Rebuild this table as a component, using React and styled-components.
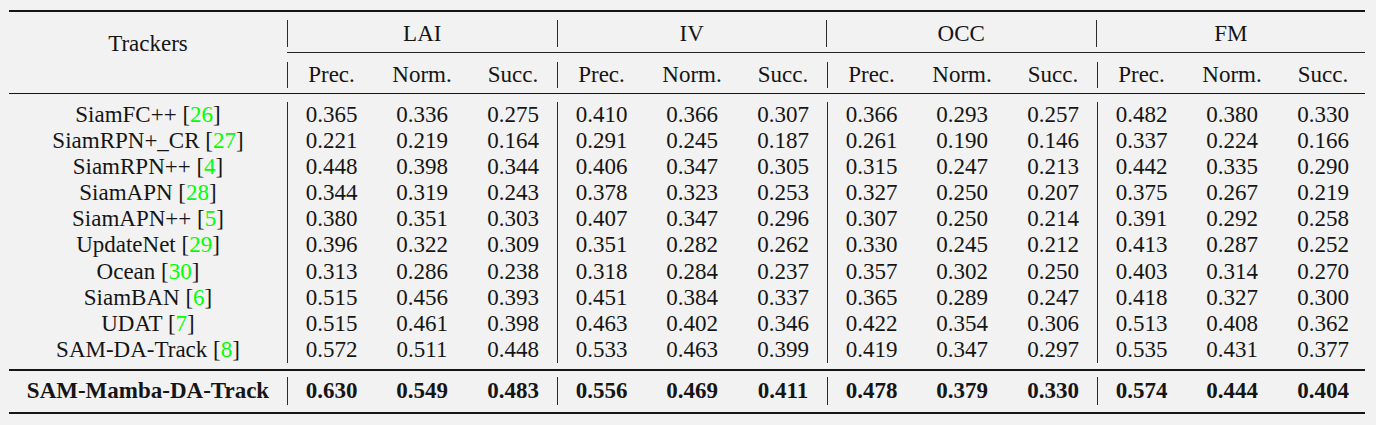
import React from 'react';
import styled, { createGlobalStyle } from 'styled-components';

const GlobalStyle = createGlobalStyle`
    html, body {
        margin: 0;
        padding: 0;
        background: #f2f2f2;
    }
    body {
        font-family: 'Liberation Serif', 'Times New Roman', serif;
        font-size: 23px;
        color: #151515;
    }
`;

const Table = styled.div`
    width: 1356px;
    margin-left: 9px;
    padding-top: 10px;
`;

const TopRule = styled.div`
    border-top: 2px solid #151515;
`;

const Head = styled.div`
    display: flex;
    border-bottom: 1px solid #151515;
`;

const TrackersHead = styled.div`
    width: 278px;
    display: flex;
    align-items: center;
    justify-content: center;
    padding-bottom: 17px;
`;

const HeadSide = styled.div`
    display: flex;
    flex-direction: column;
    width: 1078px;
`;

const GroupRow = styled.div`
    display: flex;
    border-bottom: 1px solid #222;
`;

const GroupTitle = styled.div`
    width: 270px;
    box-sizing: border-box;
    margin: 8px 0 5px;
    height: 27px;
    line-height: 27px;
    text-align: center;
    border-left: 1px solid #2a2a2a;
`;

const SubRow = styled.div`
    display: grid;
    grid-template-columns: repeat(4, 88px 94px 88px);
    padding: 9px 0 5px;
`;

const Row = styled.div`
    display: grid;
    grid-template-columns: 278px repeat(4, 88px 94px 88px);
    height: ${p => p.$h || '26.1px'};
    line-height: ${p => p.$h || '26.1px'};
    font-weight: ${p => (p.$bold ? 'bold' : 'normal')};
`;

const Cell = styled.div`
    box-sizing: border-box;
    text-align: center;
    white-space: nowrap;
    height: ${p => p.$h || 'auto'};
    line-height: ${p => p.$h || 'inherit'};
    border-left: ${p => (p.$bar ? '1px solid #2a2a2a' : 'none')};
`;

const Body = styled.div`
    padding: 8px 0 6px;
    border-bottom: 2px solid #151515;
`;

const Final = styled.div`
    padding: 6px 0 7px;
    border-bottom: 2px solid #151515;
`;

const Cite = styled.span`
    color: #00ff00;
`;

const groups = ['LAI', 'IV', 'OCC', 'FM'];
const metrics = ['Prec.', 'Norm.', 'Succ.'];

const rows = [
    ['SiamFC++', '26', '0.365 0.336 0.275 0.410 0.366 0.307 0.366 0.293 0.257 0.482 0.380 0.330'],
    ['SiamRPN+_CR', '27', '0.221 0.219 0.164 0.291 0.245 0.187 0.261 0.190 0.146 0.337 0.224 0.166'],
    ['SiamRPN++', '4', '0.448 0.398 0.344 0.406 0.347 0.305 0.315 0.247 0.213 0.442 0.335 0.290'],
    ['SiamAPN', '28', '0.344 0.319 0.243 0.378 0.323 0.253 0.327 0.250 0.207 0.375 0.267 0.219'],
    ['SiamAPN++', '5', '0.380 0.351 0.303 0.407 0.347 0.296 0.307 0.250 0.214 0.391 0.292 0.258'],
    ['UpdateNet', '29', '0.396 0.322 0.309 0.351 0.282 0.262 0.330 0.245 0.212 0.413 0.287 0.252'],
    ['Ocean', '30', '0.313 0.286 0.238 0.318 0.284 0.237 0.357 0.302 0.250 0.403 0.314 0.270'],
    ['SiamBAN', '6', '0.515 0.456 0.393 0.451 0.384 0.337 0.365 0.289 0.247 0.418 0.327 0.300'],
    ['UDAT', '7', '0.515 0.461 0.398 0.463 0.402 0.346 0.422 0.354 0.306 0.513 0.408 0.362'],
    ['SAM-DA-Track', '8', '0.572 0.511 0.448 0.533 0.463 0.399 0.419 0.347 0.297 0.535 0.431 0.377'],
];

const ours = '0.630 0.549 0.483 0.556 0.469 0.411 0.478 0.379 0.330 0.574 0.444 0.404';

const Values = ({ values, h }) =>
    values.split(' ').map((v, i) => (
        <Cell key={i} $bar={i % 3 === 0} $h={h}>
            {v}
        </Cell>
    ));

const App = () => (
    <>
        <GlobalStyle />
        <Table>
            <TopRule />
            <Head>
                <TrackersHead>Trackers</TrackersHead>
                <HeadSide>
                    <GroupRow>
                        {groups.map(g => (
                            <GroupTitle key={g}>{g}</GroupTitle>
                        ))}
                    </GroupRow>
                    <SubRow>
                        {groups.map(g =>
                            metrics.map((m, i) => (
                                <Cell key={g + m} $bar={i === 0} $h="26px">
                                    {m}
                                </Cell>
                            ))
                        )}
                    </SubRow>
                </HeadSide>
            </Head>
            <Body>
                {rows.map(([name, ref, values]) => (
                    <Row key={name}>
                        <Cell>
                            {name} [<Cite>{ref}</Cite>]
                        </Cell>
                        <Values values={values} />
                    </Row>
                ))}
            </Body>
            <Final>
                <Row $bold $h="28px">
                    <Cell>SAM-Mamba-DA-Track</Cell>
                    <Values values={ours} />
                </Row>
            </Final>
        </Table>
    </>
);

export default App;
